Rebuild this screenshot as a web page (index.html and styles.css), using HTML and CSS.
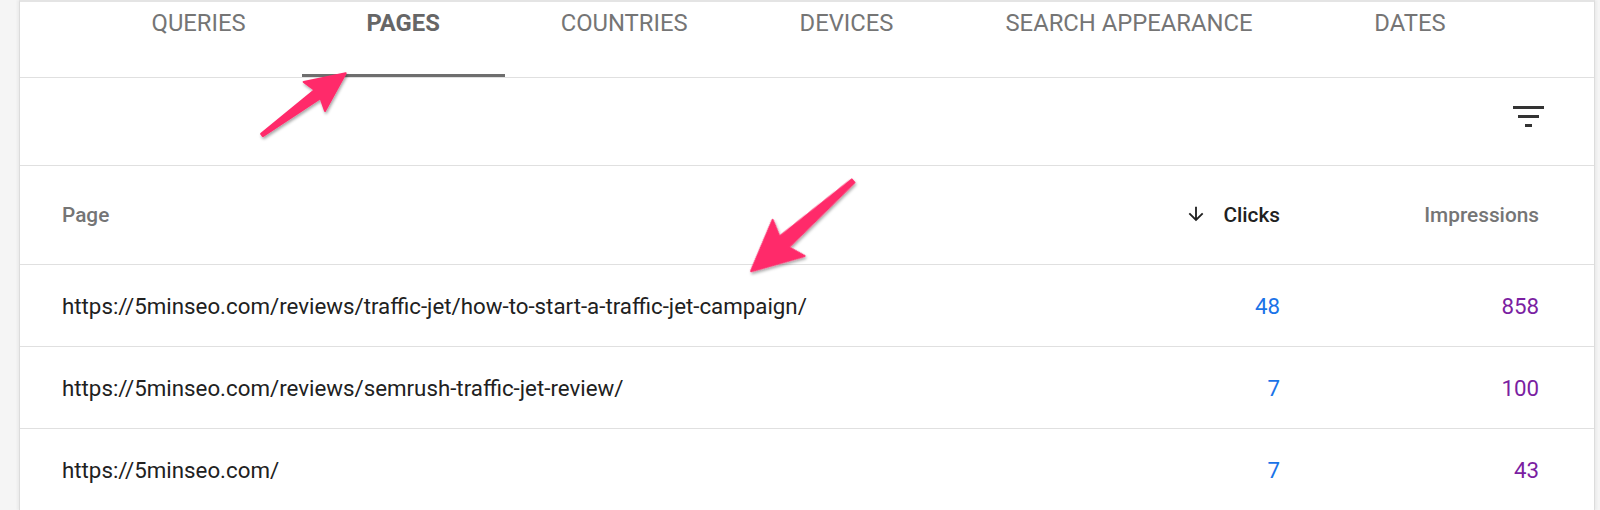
FILE: index.html
```html
<!DOCTYPE html>
<html>
<head>
<meta charset="utf-8">
<link rel="stylesheet" href="styles.css">
</head>
<body>
<div class="card">
  <nav class="tabs">
    <div class="tab">QUERIES</div>
    <div class="tab active">PAGES</div>
    <div class="tab">COUNTRIES</div>
    <div class="tab">DEVICES</div>
    <div class="tab">SEARCH APPEARANCE</div>
    <div class="tab">DATES</div>
  </nav>
  <div class="toolbar">
    <svg class="filter" width="32" height="22" viewBox="0 0 32 22">
      <rect x="0" y="0" width="31" height="3" fill="#333"/>
      <rect x="5" y="9" width="21" height="3" fill="#333"/>
      <rect x="12" y="18" width="7" height="3" fill="#333"/>
    </svg>
  </div>
  <div class="row head">
    <div class="c-page">Page</div>
    <div class="c-clicks sorted">
      <svg class="arrow" width="22" height="22" viewBox="0 0 24 24"><path d="M20 12l-1.41-1.41L13 16.17V4h-2v12.17l-5.58-5.59L4 12l8 8 8-8z" fill="#212121"/></svg>
      <span>Clicks</span>
    </div>
    <div class="c-impr">Impressions</div>
  </div>
  <div class="row">
    <div class="c-page">https://5minseo.com/reviews/traffic-jet/how-to-start-a-traffic-jet-campaign/</div>
    <div class="c-clicks num-clicks">48</div>
    <div class="c-impr num-impr">858</div>
  </div>
  <div class="row">
    <div class="c-page">https://5minseo.com/reviews/semrush-traffic-jet-review/</div>
    <div class="c-clicks num-clicks">7</div>
    <div class="c-impr num-impr">100</div>
  </div>
  <div class="row">
    <div class="c-page">https://5minseo.com/</div>
    <div class="c-clicks num-clicks">7</div>
    <div class="c-impr num-impr">43</div>
  </div>
</div>
<svg class="annot" width="1600" height="510" viewBox="0 0 1600 510">
  <defs>
    <filter id="sh" x="-20%" y="-20%" width="140%" height="140%">
      <feDropShadow dx="1" dy="2" stdDeviation="1.5" flood-color="#000" flood-opacity="0.35"/>
    </filter>
  </defs>
  <g filter="url(#sh)" fill="#ff2c6b">
    <g transform="translate(262,135) rotate(-36.4)">
      <polygon points="0,-1.5 69,-5 65,-18 104,0 65,18 69,5 0,1.5" stroke="#ff2c6b" stroke-width="2" stroke-linejoin="round"/>
    </g>
    <g transform="translate(853,181) rotate(138.5)">
      <polygon points="0,-2 92,-7 86,-24 136,0 86,24 92,7 0,2" stroke="#ff2c6b" stroke-width="2" stroke-linejoin="round"/>
    </g>
  </g>
</svg>
</body>
</html>
```
FILE: styles.css
```css
html, body {
  margin: 0;
  padding: 0;
}
body {
  background: #f5f5f5;
  font-family: Roboto, "Liberation Sans", sans-serif;
  position: relative;
  height: 510px;
  overflow: hidden;
}
.card {
  margin: 0 5px 0 19px;
  height: 510px;
  background: #fff;
  border-top: 2px solid #e4e4e4;
  border-left: 1px solid #dcdcdc;
  border-right: 1px solid #dcdcdc;
  box-shadow: -2px 0 2px rgba(0,0,0,0.04), 2px 0 2px rgba(0,0,0,0.04);
  box-sizing: border-box;
}
.tabs {
  display: flex;
  justify-content: center;
  height: 75px;
  padding-right: 7px;
  border-bottom: 1px solid #e0e0e0;
}
.tab {
  min-width: 203px;
  padding: 7px 56px 0;
  box-sizing: border-box;
  text-align: center;
  font-size: 23.8px;
  line-height: 28px;
  color: #757575;
  border-bottom: 3px solid transparent;
  white-space: nowrap;
}
.tab.active {
  font-weight: 700;
  color: #666;
  border-bottom-color: #6e6e6e;
}
.toolbar {
  height: 88px;
  box-sizing: border-box;
  border-bottom: 1px solid #e0e0e0;
  display: flex;
  align-items: flex-start;
  justify-content: flex-end;
  padding: 28px 49px 0 0;
}
.filter {
  display: block;
}
.row {
  display: flex;
  align-items: center;
  height: 81px;
  border-bottom: 1px solid #e0e0e0;
  padding: 0 55px 0 42px;
  font-size: 22.3px;
  color: #212121;
}
.row.head {
  height: 98px;
  font-size: 20.8px;
  font-weight: 500;
  color: #757575;
}
.c-page {
  flex: 1;
  white-space: nowrap;
}
.c-clicks {
  width: 220px;
  text-align: right;
}
.c-impr {
  width: 259px;
  text-align: right;
}
.sorted {
  color: #212121;
  display: flex;
  align-items: center;
  justify-content: flex-end;
}
.arrow {
  display: block;
  margin-right: 16px;
  margin-top: -3px;
}
.num-clicks {
  color: #1a73e8;
}
.num-impr {
  color: #7b1fa2;
}
.annot {
  position: absolute;
  left: 0;
  top: 0;
  pointer-events: none;
}
```
